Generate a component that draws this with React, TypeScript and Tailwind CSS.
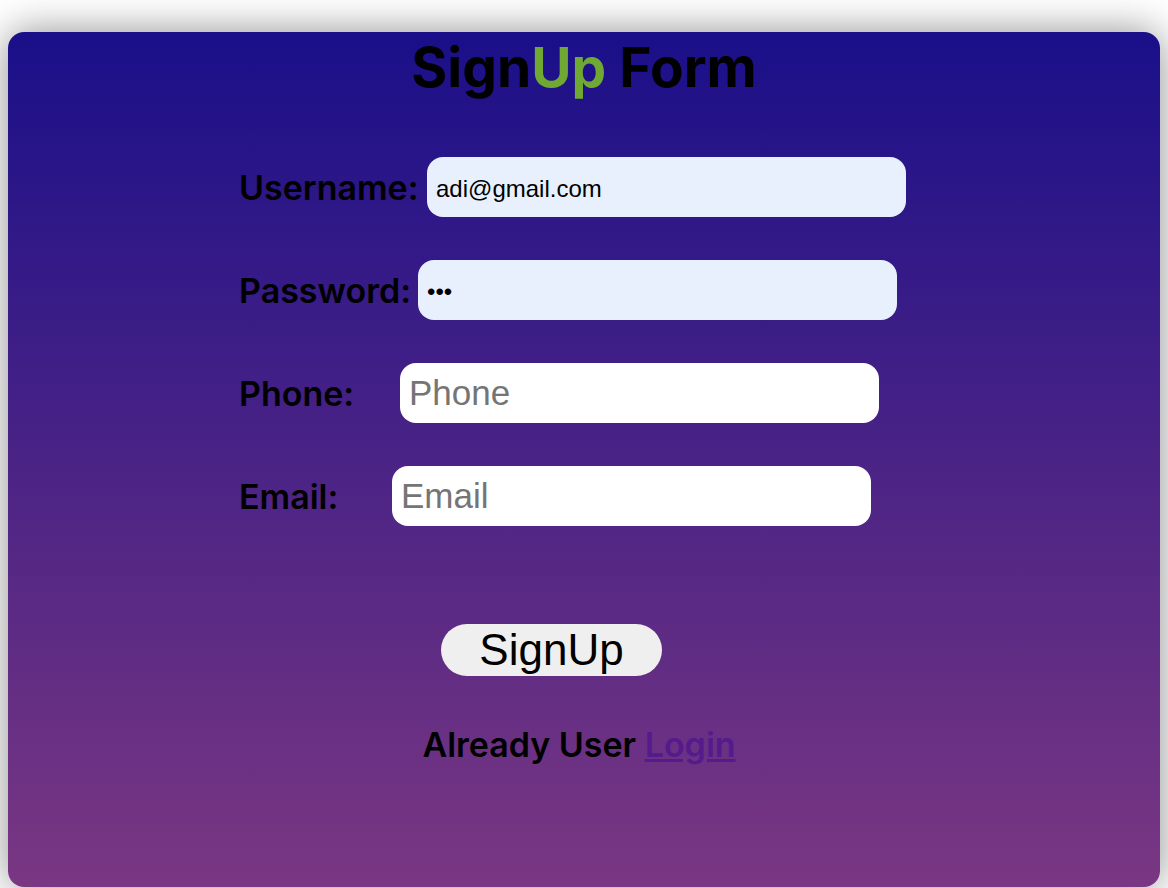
import { useState } from 'react';

const rows = [
  { label: 'Username:', labelWidth: 'w-[188px]', type: 'text', placeholder: 'Username', value: 'adi@gmail.com', filled: true },
  { label: 'Password:', labelWidth: 'w-[179px]', type: 'password', placeholder: 'Password', value: 'abc', filled: true },
  { label: 'Phone:', labelWidth: 'w-[161px]', type: 'text', placeholder: 'Phone', value: '', filled: false },
  { label: 'Email:', labelWidth: 'w-[153px]', type: 'email', placeholder: 'Email', value: '', filled: false },
];

export default function App() {
  const [values, setValues] = useState(rows.map((r) => r.value));

  return (
    <main className="min-h-screen bg-white px-2 pt-8 font-['Inter',sans-serif]">
      <div className="h-[855px] rounded-2xl bg-[linear-gradient(to_bottom,#1a0f89,#7a3782)] pt-[2px] shadow-[0_0_40px_rgba(0,0,0,0.45)]">
        <h1 className="text-center text-[55px] font-bold leading-[66px] text-black">
          Sign<span className="text-[#6fa832]">Up</span> Form
        </h1>

        <form className="mt-[57px] ml-[231px] flex flex-col gap-[43px]" onSubmit={(e) => e.preventDefault()}>
          {rows.map((row, i) => (
            <div key={row.label} className="flex items-center">
              <label className={`${row.labelWidth} shrink-0 text-[34px] font-semibold text-black`}>
                {row.label}
              </label>
              <input
                type={row.type}
                placeholder={row.placeholder}
                value={values[i]}
                onChange={(e) => {
                  const next = [...values];
                  next[i] = e.target.value;
                  setValues(next);
                }}
                className={`h-[60px] w-[479px] rounded-2xl px-[9px] font-['Liberation_Sans',Arial,sans-serif] text-black placeholder:text-[#757575] focus:outline-none ${
                  row.filled ? 'bg-[#e8f0fe] pt-[4px] text-[24px]' : 'bg-white text-[35px]'
                }`}
              />
            </div>
          ))}
        </form>

        <div className="mt-[98px] ml-[433px]">
          <button className="flex h-[52px] w-[221px] items-center justify-center rounded-full bg-[#efefef] font-['Liberation_Sans',Arial,sans-serif] text-[44px] leading-none text-black">
            SignUp
          </button>
        </div>

        <p className="mt-[47px] pr-[10px] text-center text-[34px] font-semibold leading-[44px] text-black">
          Already User{' '}
          <a href="#" className="text-[#551a8b] underline">
            Login
          </a>
        </p>
      </div>
    </main>
  );
}
